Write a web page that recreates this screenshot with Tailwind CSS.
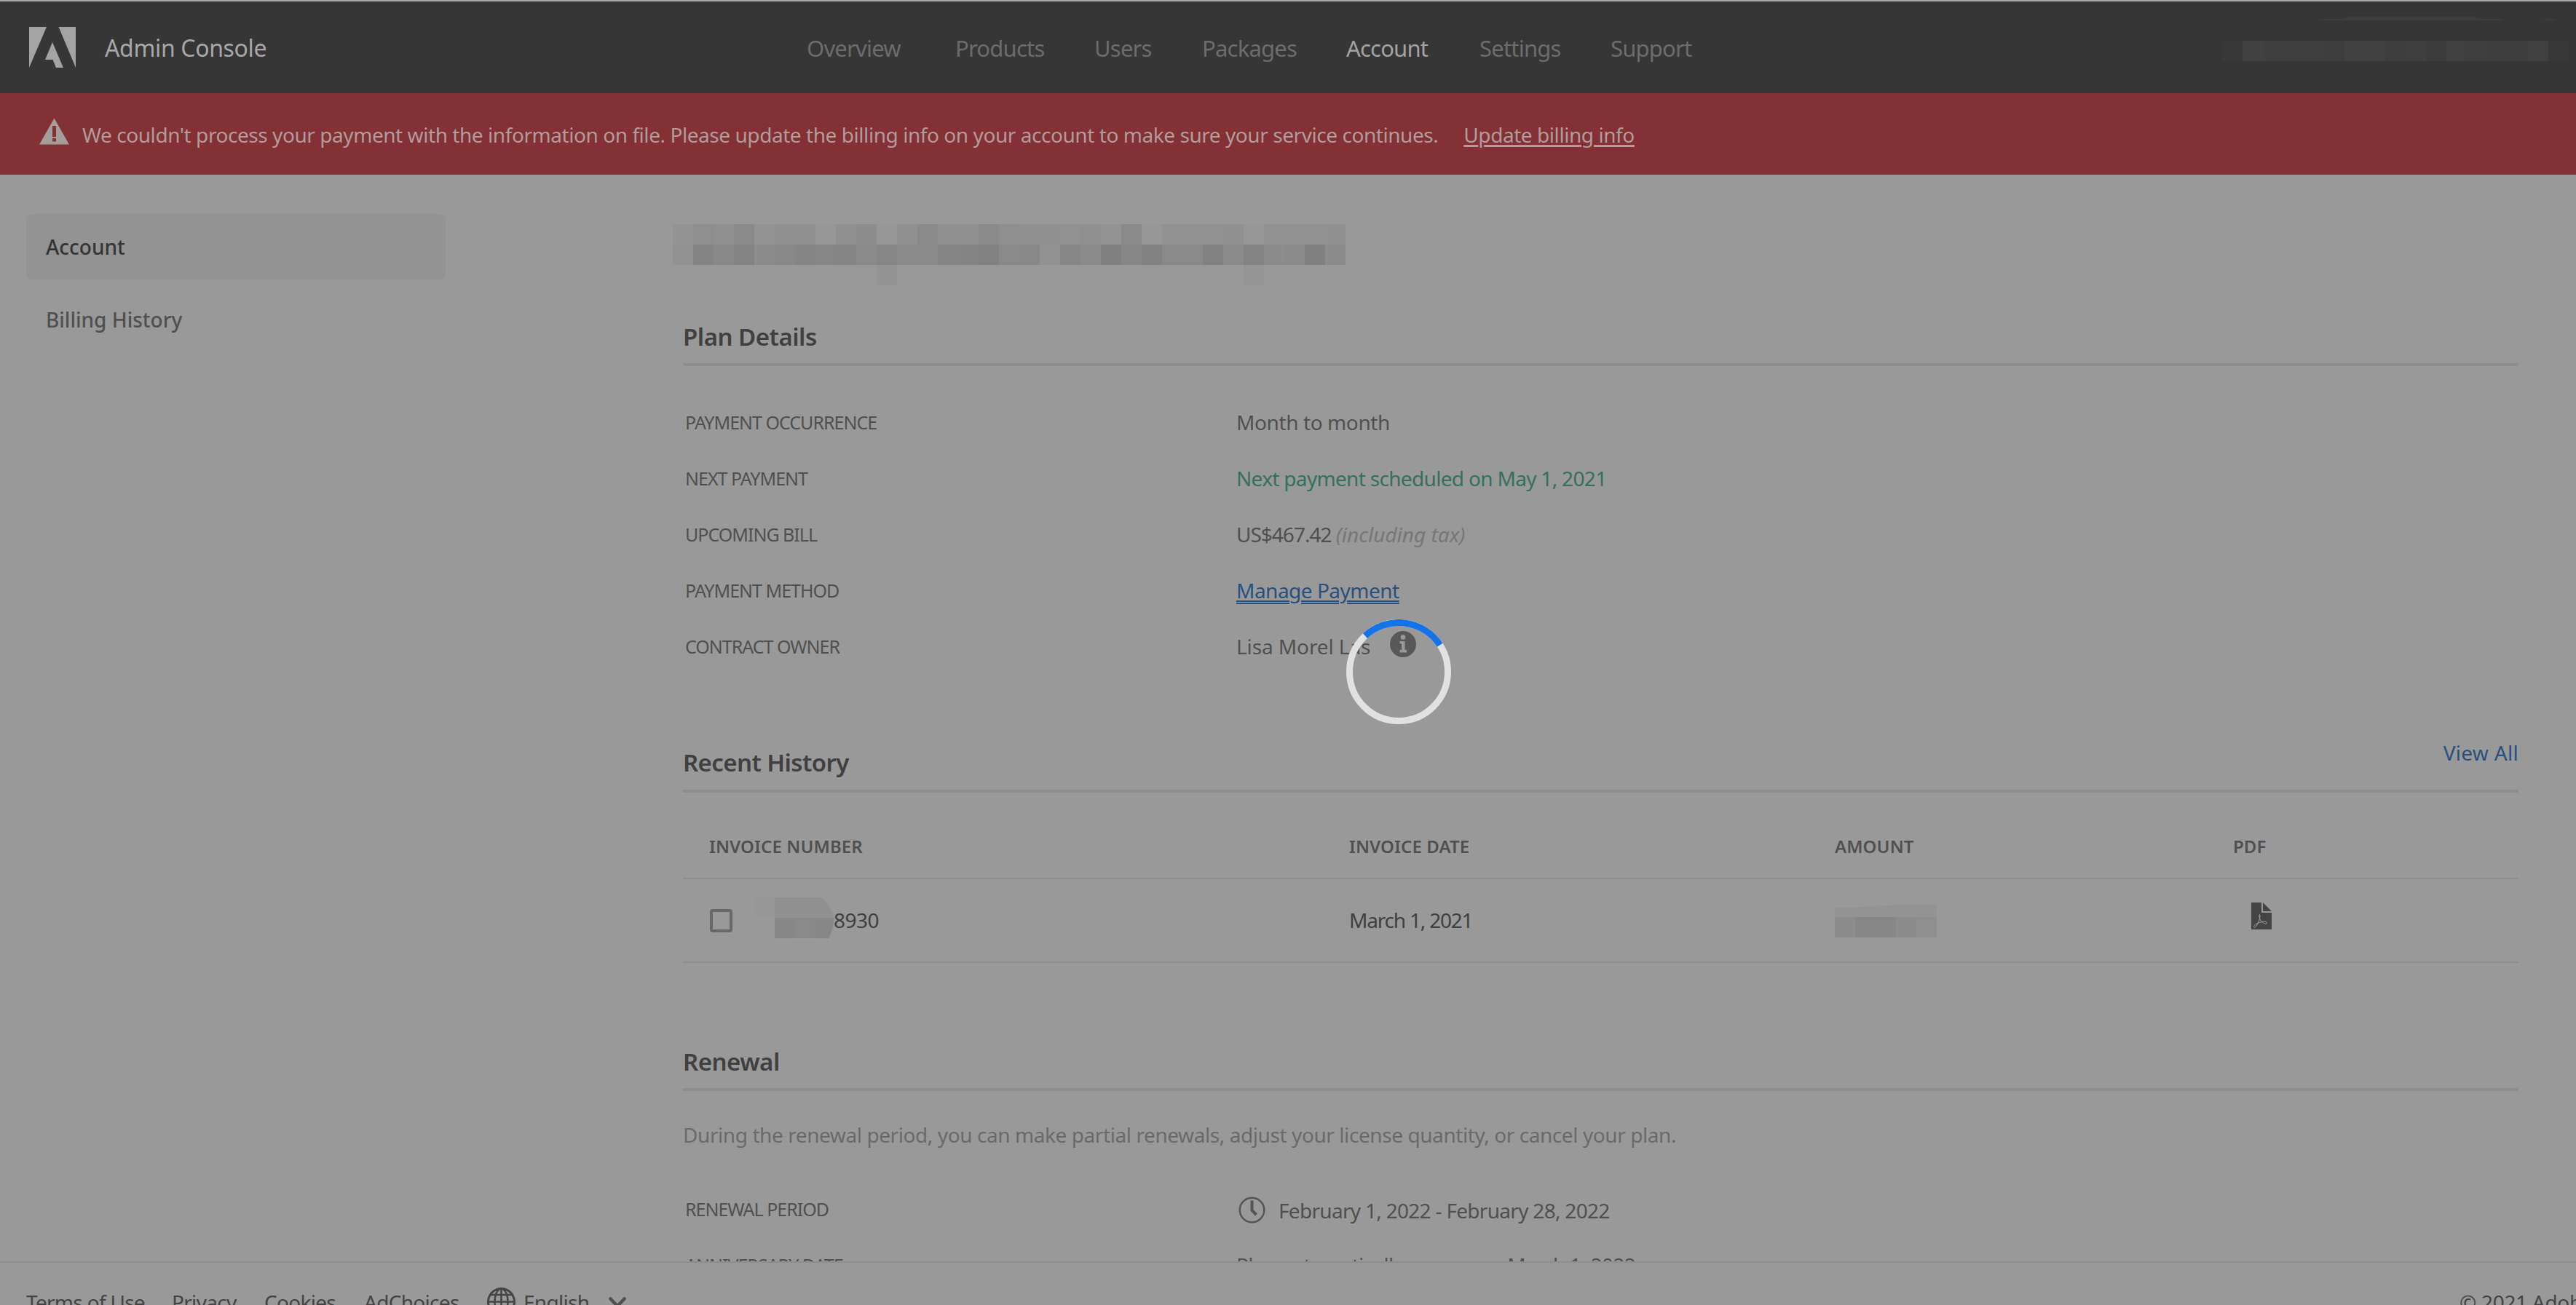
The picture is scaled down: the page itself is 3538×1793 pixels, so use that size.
<!DOCTYPE html>
<html lang="en">
  <head>
    <meta charset="UTF-8" />
    <title>Admin Console</title>
    <meta name="viewport" content="width=device-width, initial-scale=1" />
    <script src="https://cdn.jsdelivr.net/npm/@tailwindcss/browser@4"></script>
  </head>
  <body class="relative flex h-screen flex-col overflow-hidden whitespace-nowrap border-t-2 border-[#a9a9a9] bg-[#999] font-['Noto_Sans',sans-serif] text-[28px] leading-10 tracking-[-0.5px] text-[#505050]">
    <header class="relative flex h-[126px] shrink-0 items-center bg-[#363636] pl-10">
      <svg class="h-14 w-16" viewBox="0 0 64 56" fill="#a3a3a3">
        <path d="M0 0h24L0 56zM40.500 0H64v56zM32 21l15 35H37l-4.500-11H22z" />
      </svg>
      <span class="ml-10 w-[964px] pt-0.5 text-[32px] tracking-[-0.35px] text-[#a8a8a8]">Admin Console</span>
      <nav class="flex pt-px text-[31px] tracking-[-0.8px] text-[#6c6c6c]">
        <a class="w-[204px]">Overview</a>
        <a class="w-[191px]">Products</a>
        <a class="w-[148px]">Users</a>
        <a class="w-[198px]">Packages</a>
        <a class="w-[183px] text-[#a3a3a3]">Account</a>
        <a class="w-[180px]">Settings</a>
        <a>Support</a>
      </nav>
      <div id="org" class="mt-2.5 mr-2.5 ml-auto flex"></div>
      <svg class="absolute top-[21px] right-6 h-[5px] w-[330px]" viewBox="0 0 330 5" fill="#3d3d3d">
        <path d="M0 5l8-2h24l10-3h170l12 3h26l5 2zM308 5l5-2h10l5 2z" />
      </svg>
    </header>

    <div class="flex h-28 shrink-0 items-center bg-[#833135] pl-[54px] tracking-[-0.44px] text-[#b29b9c]">
      <svg class="mt-[-7px] h-[37px] w-[41px]" viewBox="0 0 41 37">
        <path d="M20.500 0.500L41 36.500H0z" fill="#a59c9c" />
        <path d="M18 11h5v15h-5zM18 28h5v4.500h-5z" fill="#833135" />
      </svg>
      <span class="ml-[18px] pt-[2px]">We couldn't process your payment with the information on file. Please update the billing info on your account to make sure your service continues.</span>
      <a class="ml-[35px] pt-[2px] underline decoration-[3px] underline-offset-[3px]">Update billing info</a>
    </div>

    <div class="flex min-h-0 flex-1 overflow-hidden">
      <aside class="flex w-[938px] shrink-0 flex-col gap-2.5 pt-[54px] pl-9 font-medium tracking-normal">
        <a class="flex h-[90px] w-[576px] items-center rounded-lg bg-[#939393] pl-[27px] text-[#353535]">Account</a>
        <a class="flex h-[90px] w-[576px] items-center pl-[27px]">Billing History</a>
      </aside>

      <main class="w-[2521px] shrink-0 pt-[68px]">
        <div id="company" class="ml-[-14px] grid h-[84px] w-[924px] grid-cols-33"></div>

        <h2 class="flex h-[111px] items-end rounded-sm border-b-4 border-[#8e8e8e] pb-4 text-[33px] font-semibold text-[#404040]">Plan Details</h2>
        <dl class="grid auto-rows-[77px] grid-cols-[760px_1fr] items-center pt-[38px]">
          <dt class="pl-[3px] text-[25px] tracking-[-1px]">PAYMENT OCCURRENCE</dt>
          <dd class="tracking-[-0.4px]">Month to month</dd>
          <dt class="pl-[3px] text-[25px] tracking-[-1px]">NEXT PAYMENT</dt>
          <dd class="tracking-[-0.68px] text-[#35705a]">Next payment scheduled on May 1, 2021</dd>
          <dt class="pl-[3px] text-[25px] tracking-[-1px]">UPCOMING BILL</dt>
          <dd class="tracking-[-1px]">US$467.42 <i class="tracking-normal text-[#777]">(including tax)</i></dd>
          <dt class="pl-[3px] text-[25px] tracking-[-1px]">PAYMENT METHOD</dt>
          <dd><a class="text-[#28507f] underline decoration-double decoration-2 underline-offset-[3px]">Manage Payment</a></dd>
          <dt class="pl-[3px] text-[25px] tracking-[-1px]">CONTRACT OWNER</dt>
          <dd class="flex items-center tracking-[-0.1px]">
            <span class="w-[211px]">Lisa Morel Las</span>
            <svg class="-mt-1.5 h-9 w-9" viewBox="0 0 36 36">
              <circle cx="18" cy="18" r="18" fill="#585858" />
              <circle cx="18" cy="8.500" r="3.300" fill="#999" />
              <path d="M13.500 14h7v12h2.500v3.500h-9.500V26H16v-8.500h-2.500z" fill="#999" />
            </svg>
          </dd>
        </dl>

        <div class="flex h-[163px] items-end justify-between border-b-4 border-[#8e8e8e] pb-[17px]">
          <h2 class="text-[33px] font-semibold tracking-[-0.6px] text-[#404040]">Recent History</h2>
          <a class="mb-3.5 tracking-[0.3px] text-[#28507f]">View All</a>
        </div>
        <div class="grid h-[119px] grid-cols-[879px_667px_547px_1fr] items-center border-b-2 border-[#8e8e8e] pt-[30px] pl-9 text-[24px] font-semibold tracking-[0.1px]">
          <span>INVOICE NUMBER</span>
          <span>INVOICE DATE</span>
          <span>AMOUNT</span>
          <span>PDF</span>
        </div>
        <div class="grid h-[115px] grid-cols-[879px_667px_547px_1fr] items-center border-b-2 border-[#8e8e8e] pl-9 text-[#404040]">
          <div class="flex items-center">
            <span class="ml-px h-8 w-[31px] rounded-[4px] border-4 border-[#686868]"></span>
            <svg class="-mt-2 ml-[31px] h-14 w-[108px]" viewBox="0 0 108 56">
              <path d="M0 0h27v28H0z" fill="#979797" />
              <path d="M27 0h63q15 10 18 28H27z" fill="#919191" />
              <path d="M27 28h81q0 16-7 28H27z" fill="#878787" />
              <path d="M54 28h28v28H54z" fill="#898989" />
            </svg>
            <span class="-mt-0.5">8930</span>
          </div>
          <span class="-mt-0.5 tracking-[-1.2px]">March 1, 2021</span>
          <svg class="mt-0.5 h-[45px] w-[140px]" viewBox="0 0 140 45">
            <path d="M0 4l40-1 44-3h56v17H0z" fill="#939393" />
            <path d="M0 17h140v28H0z" fill="#8c8c8c" />
            <path d="M28 17h56v28H28z" fill="#868686" />
            <path d="M112 17h28v28h-28z" fill="#8e8e8e" />
          </svg>
          <svg class="-mt-3 ml-[25px] h-[37px] w-7" viewBox="0 0 28 37">
            <path d="M0 0h14v14h14v23H0zM16 0l12 12H16z" fill="#444" />
            <path d="M11.500 16.500c-2 3 1 9 5 11.500 3 2 5 1 5-.2s-4-1.800-8.500-.8-9.500 4-9.500 6.200 2.500 1.500 5-3.500 4.500-11 3-13.200z" fill="none" stroke="#a0a0a0" stroke-width="1" />
          </svg>
        </div>

        <h2 class="flex h-[176px] items-end border-b-4 border-[#8e8e8e] pb-4 text-[33px] font-semibold text-[#404040]">Renewal</h2>
        <p class="pt-[40px] tracking-[-0.42px] text-[#6a6a6a]">During the renewal period, you can make partial renewals, adjust your license quantity, or cancel your plan.</p>
        <dl class="grid auto-rows-[77px] grid-cols-[760px_1fr] items-center pt-[45px]">
          <dt class="-mt-1 pl-[3px] text-[25px] tracking-[-1px]">RENEWAL PERIOD</dt>
          <dd class="flex items-center tracking-[-0.7px]">
            <svg class="mr-[18px] ml-[3px] h-[37px] w-[37px]" viewBox="0 0 37 37" fill="none" stroke="#555">
              <circle cx="18.500" cy="18.500" r="16.800" stroke-width="2.500" />
              <path d="M18.500 5.500v13.500l6 6" stroke-width="4" />
            </svg>
            February 1, 2022 - February 28, 2022
          </dd>
          <dt class="-mt-1 pl-[3px] text-[25px] tracking-[-1px]">ANNIVERSARY DATE</dt>
          <dd class="-mt-1 tracking-[-0.7px]">Plan automatically renews on March 1, 2022</dd>
        </dl>
      </main>
    </div>

    <footer class="flex h-[60px] shrink-0 items-start overflow-hidden border-t-2 border-[#8e8e8e] bg-[#999] pt-[34px] pl-9 tracking-[-0.7px] text-[#444]">
      <a class="w-[200px]">Terms of Use</a>
      <a class="w-[127px]">Privacy</a>
      <a class="w-[137px]">Cookies</a>
      <a class="w-[169px]">AdChoices</a>
      <svg class="h-[39px] w-[39px]" viewBox="0 0 39 39" fill="none" stroke="#444" stroke-width="2.500">
        <circle cx="19.500" cy="19.500" r="18" stroke-width="3" />
        <ellipse cx="19.500" cy="19.500" rx="9" ry="18" />
        <path d="M19.500 1.500v36M4 10h31M1.500 19.500h36M4 29h31" />
      </svg>
      <span class="ml-[11px] w-[117px]">English</span>
      <svg class="mt-[13px] h-4 w-6" viewBox="0 0 24 16" fill="none" stroke="#505050" stroke-width="4.500" stroke-linecap="round">
        <path d="M2.500 2.500L12 12.500l9.500-10" />
      </svg>
      <span class="ml-auto w-[160px] tracking-[-0.3px]">© 2021 Adobe</span>
    </footer>

    <!-- Loading spinner -->
    <svg class="absolute top-[849px] left-[1849px] h-36 w-36" viewBox="0 0 144 144" fill="none" stroke-width="9">
      <circle cx="72" cy="72" r="67.500" stroke="#e1e1e1" />
      <path d="M26 22.600A67.500 67.500 0 0 1 128.600 35.200" stroke="#1473e6" />
    </svg>

    <script>
      // Grey levels of the masked organisation and company names, 28px per cell
      const org = "39 41 3f 3f 3f 3d 41 40 3d 3f 3c 40 3f 3e 3d 40 38";
      const company = [
        "93 8e 90 8a 93 91 91 97 90 8d 97 91 8a 91 91 8a 8f 90 90 92 90 93 8a 97 92 92 92 91 97 92 92 92 91",
        "92 84 88 83 8c 88 85 86 85 8a 86 8a 8a 85 84 81 89 88 92 86 8a 80 86 82 89 89 81 8a 83 8c 8a 80 8c",
        "99 99 99 99 99 99 99 99 99 98 94 99 99 99 99 99 99 99 99 99 99 99 99 99 99 99 99 99 95 99 99 99 99",
      ];

      const fill = (el, levels) => {
        for (const v of levels.split(" ")) {
          const cell = document.createElement("span");
          cell.className = "block h-7 w-7";
          cell.style.backgroundColor = "#" + v + v + v;
          el.append(cell);
        }
      };

      fill(document.getElementById("org"), org);
      fill(document.getElementById("company"), company.join(" "));
    </script>
  </body>
</html>
